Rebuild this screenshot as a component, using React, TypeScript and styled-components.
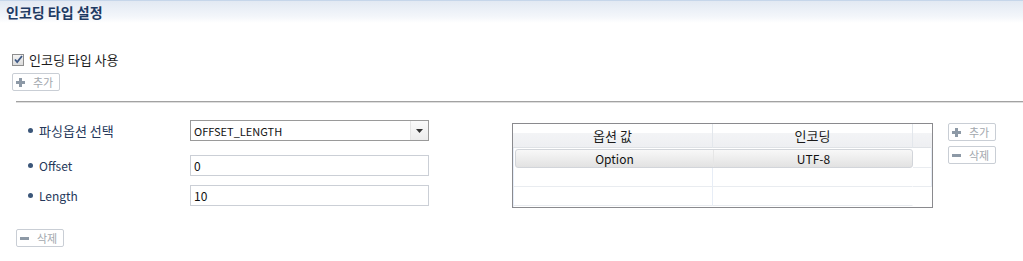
import styled, { createGlobalStyle } from "styled-components"

const GlobalStyle = createGlobalStyle`
  body {
    margin: 0;
    background: #ffffff;
    font-family: "Noto Sans CJK KR", "Noto Sans", sans-serif;
    font-size: 13px;
    color: #222222;
  }
`

const Header = styled.div`
  height: 22px;
  border-top: 1px solid #c6d6ea;
  background: linear-gradient(to bottom, #e2e9f3 0%, #f3f6fa 70%, #ffffff 100%);
  padding-left: 6px;
  display: flex;
  align-items: center;
  font-size: 14px;
  font-weight: bold;
  color: #1e3a63;
`
const Content = styled.div`
  padding: 30px 0 0 12px;
`
const CheckRow = styled.label`
  display: flex;
  align-items: center;
  gap: 5px;
  height: 13px;
  color: #1d1d1d;
`
const CheckBox = styled.span`
  width: 10px;
  height: 10px;
  border: 1px solid #8e8e8e;
  background: linear-gradient(to bottom, #f4f4f4, #dcdcdc);
  display: flex;
  align-items: center;
  justify-content: center;
`
const SmallButton = styled.button<{ $mt?: number }>`
  display: flex;
  align-items: center;
  gap: 8px;
  width: 48px;
  height: 18px;
  margin-top: ${(p) => p.$mt ?? 0}px;
  padding: 0 0 0 3px;
  border: 1px solid #c9ced5;
  border-radius: 2px;
  background: #ffffff;
  color: #a3a8ae;
  font-family: "Noto Sans CJK KR", sans-serif;
  font-size: 11px;
  box-sizing: border-box;
  cursor: default;
`
const Separator = styled.div`
  margin: 10px 0 0 4px;
  height: 1px;
  background: #a2a2a2;
  border-bottom: 1px solid #dedede;
`
const Body = styled.div`
  display: flex;
  align-items: flex-start;
  margin-left: 4px;
  padding-top: 17px;
`
const FormColumn = styled.div`
  width: 496px;
  display: flex;
  flex-direction: column;
`
const Field = styled.div<{ $gap: number }>`
  display: flex;
  align-items: center;
  height: 21px;
  padding-left: 12px;
  margin-bottom: ${(p) => p.$gap}px;
`
const Bullet = styled.span`
  width: 5px;
  height: 5px;
  border-radius: 50%;
  background: #3b5679;
  margin-right: 6px;
`
const Label = styled.span<{ $latin?: boolean }>`
  width: 151px;
  font-size: ${(p) => (p.$latin ? 12 : 13)}px;
  color: #25385a;
`
const Input = styled.div`
  width: 239px;
  height: 21px;
  box-sizing: border-box;
  border: 1px solid #cbcfd6;
  padding-left: 3px;
  display: flex;
  align-items: center;
  font-size: 12px;
  color: #111111;
`
const Select = styled(Input)`
  border-color: #9a9a9a;
  justify-content: space-between;
  padding-right: 0;
  font-size: 11px;
`
const DropButton = styled.span`
  width: 17px;
  height: 19px;
  border-left: 1px solid #e4e4e4;
  background: linear-gradient(to bottom, #fafafa, #ececec);
  display: flex;
  align-items: center;
  justify-content: center;
`
const TablePanel = styled.div`
  margin-top: 3px;
  width: 421px;
  height: 85px;
  box-sizing: border-box;
  border: 1px solid #8a8a8e;
  display: grid;
  grid-template-columns: 200px 200px 1fr;
  grid-template-rows: 24px 20px 19px 19px;
  align-content: start;
  box-shadow: inset 1px 0 0 #e6eefa;
`
const HeadCell = styled.div<{ $last?: boolean }>`
  display: flex;
  align-items: center;
  justify-content: center;
  background: linear-gradient(to bottom, #ffffff 0%, #ffffff 40%, #f3f4f6 40%, #eeeff2 100%);
  border-bottom: 1px solid #dfe2e6;
  border-right: 1px solid ${(p) => (p.$last ? "transparent" : "#e3e7ec")};
  color: #1a1a1a;
`
const SelectedRow = styled.div`
  grid-column: 1 / 3;
  margin: 1px 0 0 2px;
  display: grid;
  grid-template-columns: 198px 200px;
  border: 1px solid #d2d5da;
  border-radius: 3px;
  background: linear-gradient(to bottom, #f8f8f8, #e2e2e2);
`
const SelectedCell = styled.div<{ $divider?: boolean }>`
  display: flex;
  align-items: center;
  justify-content: center;
  border-right: 1px solid ${(p) => (p.$divider ? "#e6e6e6" : "transparent")};
  font-size: 12px;
  color: #111111;
`
const Cell = styled.div<{ $last?: boolean }>`
  border-bottom: 1px solid #e9ecf0;
  border-right: 1px solid ${(p) => (p.$last ? "transparent" : "#e7edf6")};
`
const SideButtons = styled.div`
  margin: 3px 0 0 15px;
  display: flex;
  flex-direction: column;
  gap: 5px;
`

function PlusIcon() {
  return (
    <svg width="9" height="9" viewBox="0 0 9 9">
      <path d="M3 0h3v3h3v3H6v3H3V6H0V3h3z" fill="#8d99a6" />
    </svg>
  )
}

function MinusIcon() {
  return (
    <svg width="9" height="9" viewBox="0 0 9 9">
      <rect x="0" y="3" width="9" height="3" fill="#8d99a6" />
    </svg>
  )
}

function AddButton({ mt }: { mt?: number }) {
  return (
    <SmallButton $mt={mt}>
      <PlusIcon />
      추가
    </SmallButton>
  )
}

function RemoveButton({ mt }: { mt?: number }) {
  return (
    <SmallButton $mt={mt}>
      <MinusIcon />
      삭제
    </SmallButton>
  )
}

export default function App() {
  return (
    <>
      <GlobalStyle />
      <Header>인코딩 타입 설정</Header>
      <Content>
        <CheckRow>
          <CheckBox>
            <svg width="9" height="9" viewBox="0 0 9 9">
              <path d="M1 4.5l2.2 2.6L8 1" stroke="#3f5a85" strokeWidth="1.8" fill="none" />
            </svg>
          </CheckBox>
          인코딩 타입 사용
        </CheckRow>
        <AddButton mt={7} />
        <Separator />
        <Body>
          <FormColumn>
            <Field $gap={14}>
              <Bullet />
              <Label>파싱옵션 선택</Label>
              <Select>
                OFFSET_LENGTH
                <DropButton>
                  <svg width="7" height="4" viewBox="0 0 7 4">
                    <path d="M0 0h7L3.5 4z" fill="#333333" />
                  </svg>
                </DropButton>
              </Select>
            </Field>
            <Field $gap={9}>
              <Bullet />
              <Label $latin>Offset</Label>
              <Input>0</Input>
            </Field>
            <Field $gap={23}>
              <Bullet />
              <Label $latin>Length</Label>
              <Input>10</Input>
            </Field>
            <RemoveButton />
          </FormColumn>
          <TablePanel>
            <HeadCell>옵션 값</HeadCell>
            <HeadCell>인코딩</HeadCell>
            <HeadCell $last />
            <SelectedRow>
              <SelectedCell $divider>Option</SelectedCell>
              <SelectedCell>UTF-8</SelectedCell>
            </SelectedRow>
            <Cell />
            <Cell />
            <Cell $last />
            <Cell />
            <Cell />
            <Cell $last />
          </TablePanel>
          <SideButtons>
            <AddButton />
            <RemoveButton />
          </SideButtons>
        </Body>
      </Content>
    </>
  )
}
